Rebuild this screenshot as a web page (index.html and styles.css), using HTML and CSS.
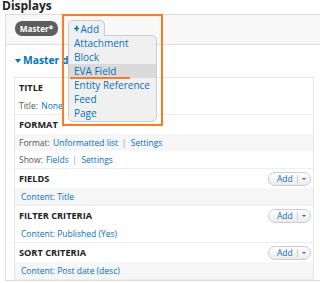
FILE: index.html
```html
<!DOCTYPE html>
<html lang="en">
<head>
	<meta charset="UTF-8">
	<title>Displays</title>
	<link rel="stylesheet" href="styles.css">
</head>
<body>
	<div class="page">
		<h2 class="page-title">Displays</h2>
		<div class="display-box">
			<div class="tabs">
				<span class="tab-active">Master*</span>
				<div class="add-menu">
					<a class="add-tab"><svg width="7" height="7" viewBox="0 0 7 7"><path d="M2.5 0h2v2.5H7v2H4.5V7h-2V4.5H0v-2h2.5z" fill="#0074bd"/></svg>Add</a>
					<ul class="add-list">
						<li>Attachment</li>
						<li>Block</li>
						<li class="hover">EVA Field</li>
						<li>Entity Reference</li>
						<li>Feed</li>
						<li>Page</li>
					</ul>
				</div>
			</div>
			<div class="display-body">
				<a class="display-link"><svg width="6" height="4" viewBox="0 0 6 4"><path d="M0 0h6L3 4z" fill="#0074bd"/></svg>Master details</a>
				<div class="settings">
					<div class="bucket">
						<div class="bucket-head">Title</div>
						<div class="setting odd"><span class="label">Title:</span> <a>None</a></div>
					</div>
					<div class="bucket">
						<div class="bucket-head">Format</div>
						<div class="setting even"><span class="label">Format:</span> <a>Unformatted list</a><span class="sep">|</span><a>Settings</a></div>
						<div class="setting odd"><span class="label">Show:</span> <a>Fields</a><span class="sep">|</span><a>Settings</a></div>
					</div>
					<div class="bucket">
						<div class="bucket-head">Fields <span class="add-btn"><span class="add-btn-text">Add</span><span class="add-btn-arrow"></span></span></div>
						<div class="setting even"><a class="item">Content: Title</a></div>
					</div>
					<div class="bucket">
						<div class="bucket-head">Filter criteria <span class="add-btn"><span class="add-btn-text">Add</span><span class="add-btn-arrow"></span></span></div>
						<div class="setting odd"><a class="item">Content: Published (Yes)</a></div>
					</div>
					<div class="bucket">
						<div class="bucket-head">Sort criteria <span class="add-btn"><span class="add-btn-text">Add</span><span class="add-btn-arrow"></span></span></div>
						<div class="setting even"><a class="item">Content: Post date (desc)</a></div>
					</div>
				</div>
			</div>
		</div>
		<div class="callout"></div>
		<div class="callout-line"></div>
	</div>
</body>
</html>
```

FILE: styles.css
```css
body {
	margin: 0;
	font-family: "Open Sans", sans-serif;
	color: #333;
	background: #fff;
	overflow: hidden;
}
a {
	color: #0074bd;
	text-decoration: none;
}
.page {
	position: relative;
}
.page-title {
	margin: 0 0 2px 2px;
	font-size: 12px;
	line-height: 12px;
	font-weight: bold;
	color: #222;
}

/* display box */
.display-box {
	margin: 0 -20px 0 5px;
	border: 1px solid #ddd;
	border-right: none;
}
.tabs {
	display: flex;
	align-items: flex-start;
	height: 30px;
	padding: 6px 0 0 9px;
	box-sizing: border-box;
	background: #f8f8f8;
	border-bottom: 1px solid #ddd;
}
.tab-active {
	width: 43px;
	height: 15px;
	line-height: 15px;
	text-align: center;
	border-radius: 7px;
	background: #5e5e5e;
	color: #fff;
	font-size: 8.2px;
	font-weight: bold;
}
.add-menu {
	position: relative;
	z-index: 5;
	margin: -1px 0 0 10px;
}
.add-tab {
	position: relative;
	z-index: 2;
	display: flex;
	align-items: center;
	width: 37px;
	height: 16px;
	box-sizing: border-box;
	padding: 0 5px;
	border: 1px solid #ccc;
	border-bottom: none;
	border-radius: 5px 5px 0 0;
	background: #f0f0f0;
	font-size: 10px;
}
.add-tab svg {
	margin-right: 1px;
}
.add-list {
	position: absolute;
	z-index: 1;
	top: calc(100% - 1px);
	left: 0;
	width: 89px;
	box-sizing: border-box;
	margin: 0;
	padding: 0 0 1px;
	list-style: none;
	border: 1px solid #ccc;
	border-radius: 0 5px 5px 5px;
	background: #f0f0f0;
	font-size: 10px;
	line-height: 14px;
	color: #0074bd;
}
.add-list li {
	padding: 0 5px;
	white-space: nowrap;
}
.add-list .hover {
	background: #dadada;
}

.display-body {
	padding: 8px 0 0 8px;
}
.display-link {
	display: block;
	margin: 0 0 10px 1px;
	line-height: 14px;
	font-size: 10.3px;
	font-weight: bold;
	white-space: nowrap;
}
.display-link svg {
	margin: 0 2px 1px 0;
}

/* settings list */
.settings {
	width: 300px;
	box-sizing: border-box;
	border: 1px solid #e6e6e6;
	border-bottom: none;
}
.bucket {
	border-bottom: 1px solid #eee;
}
.bucket-head {
	display: flex;
	align-items: center;
	justify-content: space-between;
	height: 19px;
	padding: 0 2px 0 4px;
	font-size: 9.2px;
	font-weight: bold;
	text-transform: uppercase;
	color: #222;
}
.setting {
	height: 17px;
	line-height: 17px;
	padding-left: 4px;
	font-size: 8.5px;
}
.setting.even {
	background: #f6f6f6;
}
.label {
	color: #555;
	margin-right: 1px;
}
.sep {
	color: #999;
	margin: 0 4.5px 0 3.5px;
}
.item {
	padding-left: 2px;
}

.add-btn {
	display: flex;
	align-items: center;
	width: 43px;
	height: 14px;
	box-sizing: border-box;
	border: 1px solid #ccc;
	border-radius: 7px;
	background: linear-gradient(#fff, #ececec);
	text-transform: none;
	font-weight: normal;
}
.add-btn-text {
	flex: 1;
	padding-left: 8px;
	font-size: 8.5px;
	line-height: 12px;
	color: #0074bd;
}
.add-btn-arrow {
	position: relative;
	width: 12px;
	height: 8px;
	border-left: 1px solid #ccc;
}
.add-btn-arrow::after {
	content: "";
	position: absolute;
	left: 4px;
	top: 3px;
	border-left: 2.5px solid transparent;
	border-right: 2.5px solid transparent;
	border-top: 2.5px solid #0074bd;
}

/* annotation over the screenshot */
.callout {
	position: absolute;
	z-index: 10;
	left: 62px;
	top: 14px;
	width: 101px;
	height: 112px;
	box-sizing: border-box;
	border: 2px solid #ff7a1c;
}
.callout-line {
	position: absolute;
	z-index: 10;
	left: 70px;
	top: 77px;
	width: 60px;
	height: 2px;
	background: #ff7a1c;
}
```
